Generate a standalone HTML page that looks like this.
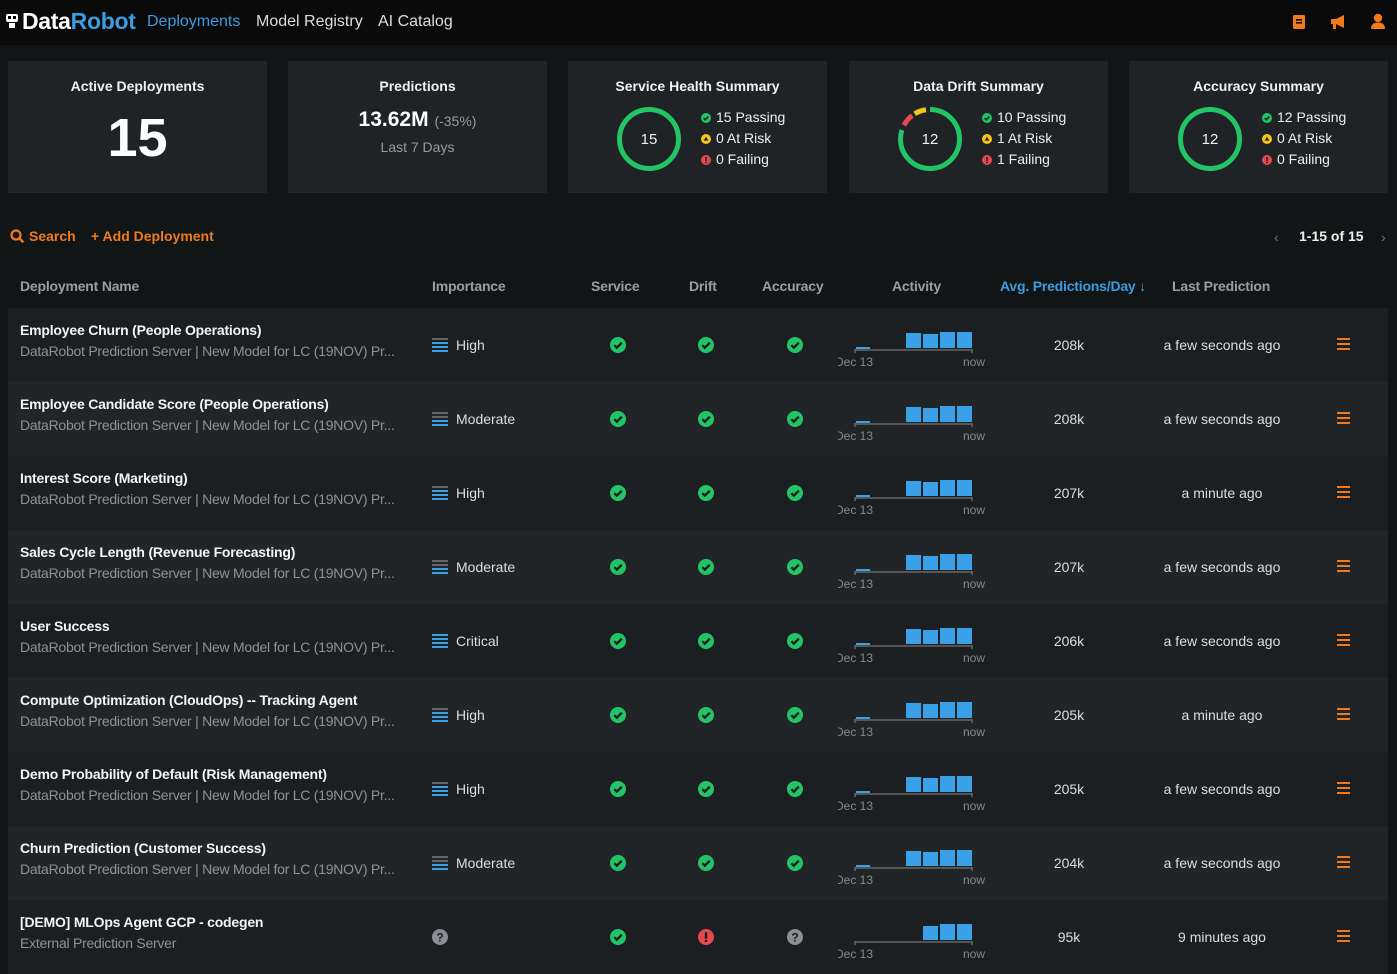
<!DOCTYPE html>
<html><head><meta charset="utf-8"><style>
*{box-sizing:border-box;margin:0;padding:0}
body{width:1397px;height:964px;overflow:hidden;background:#111516;font-family:"Liberation Sans",sans-serif;color:#e8e8e8;position:relative}
.top{position:absolute;left:0;top:0;width:1397px;height:45px;background:#0a0a0a}
.logo{position:absolute;left:22px;top:8px;font-size:23px;font-weight:bold;color:#fff;letter-spacing:-0.3px}
.logo span{color:#3d9be0}
.nav{position:absolute;top:13px;font-size:16px;color:#ddd}
.card{position:absolute;top:61px;width:259px;height:132px;background:#1f2326}
.card h3{position:absolute;top:17px;width:100%;text-align:center;font-size:14px;font-weight:bold;color:#f0f0f0}
.ring{position:absolute;left:48px;top:45px}
.leg{position:absolute;left:133px;top:46px;font-size:14px;line-height:21px;color:#eee}
.leg div{display:flex;align-items:center}
.leg svg{margin-right:5px}
.act{position:absolute;top:228px;font-size:14px;font-weight:bold;color:#f07a1c}
.th{position:absolute;top:278px;font-size:14px;font-weight:bold;color:#9a9ea2;letter-spacing:-0.2px}
.row{position:absolute;left:8px;width:1380px;height:74px}
.r0{background:#1c1f22}.r1{background:#222528}
.nm{position:absolute;left:12px;top:14px;font-size:14px;font-weight:bold;color:#f4f4f4;letter-spacing:-0.2px}
.sb{position:absolute;left:12px;top:35px;font-size:14px;color:#8e9296;letter-spacing:-0.25px}
.imp{position:absolute;left:424px;top:29px;font-size:14px;color:#ddd;display:flex;align-items:center}
.imp svg{margin-right:8px}
.ic{position:absolute;top:29px}
.sp{position:absolute;left:830px;top:10px}
.num{position:absolute;left:1021px;width:80px;text-align:center;top:29px;font-size:14px;color:#ddd}
.lp{position:absolute;left:1134px;width:160px;text-align:center;top:29px;font-size:14px;color:#ddd}
.mn{position:absolute;left:1329px;top:30px}
</style></head><body>
<svg width="0" height="0" style="position:absolute"><defs>
<g id="ok"><circle cx="8" cy="8" r="8" fill="#22c466"/><path d="M4.3 8.2l2.5 2.5 5-5" stroke="#1c1f22" stroke-width="2.3" fill="none"/></g>
<g id="bad"><circle cx="8" cy="8" r="8" fill="#e5484d"/><rect x="6.8" y="3.3" width="2.4" height="6.3" fill="#1c1f22"/><rect x="6.8" y="10.8" width="2.4" height="2.2" fill="#1c1f22"/></g>
<g id="q"><circle cx="8" cy="8" r="8" fill="#8a8d91"/><text x="8" y="12.5" font-size="12" font-weight="bold" text-anchor="middle" fill="#1c1f22" font-family="Liberation Sans">?</text></g>
<g id="sok"><circle cx="5" cy="5" r="5" fill="#22c466"/><path d="M2.6 5.2l1.6 1.6 3.2-3.2" stroke="#1f2326" stroke-width="1.6" fill="none"/></g>
<g id="swarn"><circle cx="5" cy="5" r="5" fill="#f5c518"/><path d="M5 2.6l2.3 4H2.7z" fill="#1f2326"/></g>
<g id="sbad"><circle cx="5" cy="5" r="5" fill="#e5484d"/><rect x="4.2" y="2" width="1.6" height="4" fill="#1f2326"/><rect x="4.2" y="6.8" width="1.6" height="1.4" fill="#1f2326"/></g>
<g id="menu"><rect x="0" y="0" width="13" height="2" fill="#f07a1c"/><rect x="0" y="5" width="13" height="2" fill="#f07a1c"/><rect x="0" y="10" width="13" height="2" fill="#f07a1c"/></g>
<g id="spark"><rect x="18" y="29" width="14" height="2" fill="#3aa0e8"/><rect x="68" y="15" width="15" height="15" fill="#3aa0e8"/><rect x="85" y="16" width="15" height="14" fill="#3aa0e8"/><rect x="102" y="14" width="15" height="16" fill="#3aa0e8"/><rect x="119" y="14" width="15" height="16" fill="#3aa0e8"/><path d="M17 31v4M17 32h117M134 31v4" stroke="#666" stroke-width="1.5" fill="none"/><text x="-3" y="48" font-size="12" fill="#888" font-family="Liberation Sans">Dec 13</text><text x="125" y="48" font-size="12" fill="#888" font-family="Liberation Sans">now</text></g>
<g id="i3"><rect y="0" width="16" height="2" fill="#666"/><rect y="4" width="16" height="2" fill="#3aa0e8"/><rect y="8" width="16" height="2" fill="#3aa0e8"/><rect y="12" width="16" height="2" fill="#3aa0e8"/></g>
<g id="i2"><rect y="0" width="16" height="2" fill="#666"/><rect y="4" width="16" height="2" fill="#666"/><rect y="8" width="16" height="2" fill="#3aa0e8"/><rect y="12" width="16" height="2" fill="#3aa0e8"/></g>
<g id="i4"><rect y="0" width="16" height="2" fill="#3aa0e8"/><rect y="4" width="16" height="2" fill="#3aa0e8"/><rect y="8" width="16" height="2" fill="#3aa0e8"/><rect y="12" width="16" height="2" fill="#3aa0e8"/></g>
</defs></svg>
<div class="top">
<svg style="position:absolute;left:5px;top:13px" width="14" height="16"><rect x="1" y="1" width="12" height="8" rx="2" fill="#fff"/><rect x="3" y="3" width="3" height="3" fill="#000"/><rect x="8" y="3" width="3" height="3" fill="#000"/><rect x="4" y="10" width="6" height="5" fill="#fff"/></svg>
<div class="logo">Data<span>Robot</span></div>
<div class="nav" style="left:147px;color:#3d9be0">Deployments</div>
<div class="nav" style="left:256px">Model Registry</div>
<div class="nav" style="left:378px">AI Catalog</div>
<svg style="position:absolute;left:1292px;top:14px" width="14" height="16"><rect x="1" y="1" width="12" height="14" rx="1.5" fill="#f07a1c"/><rect x="4" y="5" width="6" height="1.6" fill="#0a0a0a"/><rect x="4" y="8" width="6" height="1.6" fill="#0a0a0a"/></svg>
<svg style="position:absolute;left:1330px;top:14px" width="18" height="16"><path d="M1 5h5l8-4v13l-8-4H1z" fill="#f07a1c"/><rect x="3" y="10" width="3" height="5" fill="#f07a1c"/></svg>
<svg style="position:absolute;left:1370px;top:13px" width="16" height="17"><circle cx="8" cy="5" r="4.2" fill="#f07a1c"/><path d="M1 16c0-5 3-6.5 7-6.5s7 1.5 7 6.5z" fill="#f07a1c"/></svg>
</div>

<div class="card" style="left:8px"><h3>Active Deployments</h3><div style="position:absolute;top:46px;width:100%;text-align:center;font-size:54px;font-weight:bold;color:#fff">15</div></div>
<div class="card" style="left:288px"><h3>Predictions</h3><div style="position:absolute;top:47px;width:100%;text-align:center;font-size:21px;font-weight:bold;color:#fff">13.62M <span style="font-size:14px;font-weight:normal;color:#999">(-35%)</span></div><div style="position:absolute;top:78px;width:100%;text-align:center;font-size:14px;color:#999">Last 7 Days</div></div>
<div class="card" style="left:568px"><h3>Service Health Summary</h3>
<svg class="ring" width="66" height="66"><circle cx="33" cy="33" r="29.5" stroke="#22c466" stroke-width="5" fill="none"/><text x="33" y="38" font-size="15" text-anchor="middle" fill="#eee" font-family="Liberation Sans">15</text></svg>
<div class="leg"><div><svg width="10" height="10"><use href="#sok"/></svg>15 Passing</div><div><svg width="10" height="10"><use href="#swarn"/></svg>0 At Risk</div><div><svg width="10" height="10"><use href="#sbad"/></svg>0 Failing</div></div></div>
<div class="card" style="left:849px"><h3>Data Drift Summary</h3>
<svg class="ring" width="66" height="66"><g transform="rotate(-90 33 33)"><circle cx="33" cy="33" r="29.5" stroke="#22c466" stroke-width="5" fill="none" stroke-dasharray="148 37.4" stroke-dashoffset="0"/><circle cx="33" cy="33" r="29.5" stroke="#e5484d" stroke-width="5" fill="none" stroke-dasharray="13 172.4" stroke-dashoffset="-153"/><circle cx="33" cy="33" r="29.5" stroke="#f5c518" stroke-width="5" fill="none" stroke-dasharray="12 173.4" stroke-dashoffset="-169"/></g><text x="33" y="38" font-size="15" text-anchor="middle" fill="#eee" font-family="Liberation Sans">12</text></svg>
<div class="leg"><div><svg width="10" height="10"><use href="#sok"/></svg>10 Passing</div><div><svg width="10" height="10"><use href="#swarn"/></svg>1 At Risk</div><div><svg width="10" height="10"><use href="#sbad"/></svg>1 Failing</div></div></div>
<div class="card" style="left:1129px"><h3>Accuracy Summary</h3>
<svg class="ring" width="66" height="66"><circle cx="33" cy="33" r="29.5" stroke="#22c466" stroke-width="5" fill="none"/><text x="33" y="38" font-size="15" text-anchor="middle" fill="#eee" font-family="Liberation Sans">12</text></svg>
<div class="leg"><div><svg width="10" height="10"><use href="#sok"/></svg>12 Passing</div><div><svg width="10" height="10"><use href="#swarn"/></svg>0 At Risk</div><div><svg width="10" height="10"><use href="#sbad"/></svg>0 Failing</div></div></div>

<svg style="position:absolute;left:10px;top:229px" width="15" height="15"><circle cx="6" cy="6" r="4.5" stroke="#f07a1c" stroke-width="2.2" fill="none"/><path d="M9.3 9.3l4 4" stroke="#f07a1c" stroke-width="2.5"/></svg>
<div class="act" style="left:29px">Search</div>
<div class="act" style="left:91px">+ Add Deployment</div>
<div style="position:absolute;left:1274px;top:229px;font-size:14px;color:#777">‹</div>
<div style="position:absolute;left:1299px;top:228px;font-size:14px;font-weight:bold;color:#eee">1-15 of 15</div>
<div style="position:absolute;left:1381px;top:229px;font-size:14px;color:#777">›</div>

<div class="th" style="left:20px">Deployment Name</div>
<div class="th" style="left:432px">Importance</div>
<div class="th" style="left:591px">Service</div>
<div class="th" style="left:689px">Drift</div>
<div class="th" style="left:762px">Accuracy</div>
<div class="th" style="left:892px">Activity</div>
<div class="th" style="left:1000px;color:#3d9be0">Avg. Predictions/Day ↓</div>
<div class="th" style="left:1172px">Last Prediction</div>

<div class="row r0" style="top:308px"><div class="nm">Employee Churn (People Operations)</div><div class="sb">DataRobot Prediction Server | New Model for LC (19NOV) Pr...</div><div class="imp"><svg width="16" height="14"><use href="#i3"/></svg>High</div><svg class="ic" style="left:602px" width="16" height="16"><use href="#ok"/></svg><svg class="ic" style="left:690px" width="16" height="16"><use href="#ok"/></svg><svg class="ic" style="left:779px" width="16" height="16"><use href="#ok"/></svg><svg class="sp" width="160" height="56"><use href="#spark"/></svg><div class="num">208k</div><div class="lp">a few seconds ago</div><svg class="mn" width="13" height="12"><use href="#menu"/></svg></div>
<div class="row r1" style="top:382px"><div class="nm">Employee Candidate Score (People Operations)</div><div class="sb">DataRobot Prediction Server | New Model for LC (19NOV) Pr...</div><div class="imp"><svg width="16" height="14"><use href="#i2"/></svg>Moderate</div><svg class="ic" style="left:602px" width="16" height="16"><use href="#ok"/></svg><svg class="ic" style="left:690px" width="16" height="16"><use href="#ok"/></svg><svg class="ic" style="left:779px" width="16" height="16"><use href="#ok"/></svg><svg class="sp" width="160" height="56"><use href="#spark"/></svg><div class="num">208k</div><div class="lp">a few seconds ago</div><svg class="mn" width="13" height="12"><use href="#menu"/></svg></div>
<div class="row r0" style="top:456px"><div class="nm">Interest Score (Marketing)</div><div class="sb">DataRobot Prediction Server | New Model for LC (19NOV) Pr...</div><div class="imp"><svg width="16" height="14"><use href="#i3"/></svg>High</div><svg class="ic" style="left:602px" width="16" height="16"><use href="#ok"/></svg><svg class="ic" style="left:690px" width="16" height="16"><use href="#ok"/></svg><svg class="ic" style="left:779px" width="16" height="16"><use href="#ok"/></svg><svg class="sp" width="160" height="56"><use href="#spark"/></svg><div class="num">207k</div><div class="lp">a minute ago</div><svg class="mn" width="13" height="12"><use href="#menu"/></svg></div>
<div class="row r1" style="top:530px"><div class="nm">Sales Cycle Length (Revenue Forecasting)</div><div class="sb">DataRobot Prediction Server | New Model for LC (19NOV) Pr...</div><div class="imp"><svg width="16" height="14"><use href="#i2"/></svg>Moderate</div><svg class="ic" style="left:602px" width="16" height="16"><use href="#ok"/></svg><svg class="ic" style="left:690px" width="16" height="16"><use href="#ok"/></svg><svg class="ic" style="left:779px" width="16" height="16"><use href="#ok"/></svg><svg class="sp" width="160" height="56"><use href="#spark"/></svg><div class="num">207k</div><div class="lp">a few seconds ago</div><svg class="mn" width="13" height="12"><use href="#menu"/></svg></div>
<div class="row r0" style="top:604px"><div class="nm">User Success</div><div class="sb">DataRobot Prediction Server | New Model for LC (19NOV) Pr...</div><div class="imp"><svg width="16" height="14"><use href="#i4"/></svg>Critical</div><svg class="ic" style="left:602px" width="16" height="16"><use href="#ok"/></svg><svg class="ic" style="left:690px" width="16" height="16"><use href="#ok"/></svg><svg class="ic" style="left:779px" width="16" height="16"><use href="#ok"/></svg><svg class="sp" width="160" height="56"><use href="#spark"/></svg><div class="num">206k</div><div class="lp">a few seconds ago</div><svg class="mn" width="13" height="12"><use href="#menu"/></svg></div>
<div class="row r1" style="top:678px"><div class="nm">Compute Optimization (CloudOps) -- Tracking Agent</div><div class="sb">DataRobot Prediction Server | New Model for LC (19NOV) Pr...</div><div class="imp"><svg width="16" height="14"><use href="#i3"/></svg>High</div><svg class="ic" style="left:602px" width="16" height="16"><use href="#ok"/></svg><svg class="ic" style="left:690px" width="16" height="16"><use href="#ok"/></svg><svg class="ic" style="left:779px" width="16" height="16"><use href="#ok"/></svg><svg class="sp" width="160" height="56"><use href="#spark"/></svg><div class="num">205k</div><div class="lp">a minute ago</div><svg class="mn" width="13" height="12"><use href="#menu"/></svg></div>
<div class="row r0" style="top:752px"><div class="nm">Demo Probability of Default (Risk Management)</div><div class="sb">DataRobot Prediction Server | New Model for LC (19NOV) Pr...</div><div class="imp"><svg width="16" height="14"><use href="#i3"/></svg>High</div><svg class="ic" style="left:602px" width="16" height="16"><use href="#ok"/></svg><svg class="ic" style="left:690px" width="16" height="16"><use href="#ok"/></svg><svg class="ic" style="left:779px" width="16" height="16"><use href="#ok"/></svg><svg class="sp" width="160" height="56"><use href="#spark"/></svg><div class="num">205k</div><div class="lp">a few seconds ago</div><svg class="mn" width="13" height="12"><use href="#menu"/></svg></div>
<div class="row r1" style="top:826px"><div class="nm">Churn Prediction (Customer Success)</div><div class="sb">DataRobot Prediction Server | New Model for LC (19NOV) Pr...</div><div class="imp"><svg width="16" height="14"><use href="#i2"/></svg>Moderate</div><svg class="ic" style="left:602px" width="16" height="16"><use href="#ok"/></svg><svg class="ic" style="left:690px" width="16" height="16"><use href="#ok"/></svg><svg class="ic" style="left:779px" width="16" height="16"><use href="#ok"/></svg><svg class="sp" width="160" height="56"><use href="#spark"/></svg><div class="num">204k</div><div class="lp">a few seconds ago</div><svg class="mn" width="13" height="12"><use href="#menu"/></svg></div>
<div class="row r0" style="top:900px"><div class="nm">[DEMO] MLOps Agent GCP - codegen</div><div class="sb">External Prediction Server</div><svg class="ic" style="left:424px" width="16" height="16"><use href="#q"/></svg><svg class="ic" style="left:602px" width="16" height="16"><use href="#ok"/></svg><svg class="ic" style="left:690px" width="16" height="16"><use href="#bad"/></svg><svg class="ic" style="left:779px" width="16" height="16"><use href="#q"/></svg>
<svg class="sp" width="160" height="56"><rect x="85" y="16" width="15" height="14" fill="#3aa0e8"/><rect x="102" y="14" width="15" height="16" fill="#3aa0e8"/><rect x="119" y="14" width="15" height="16" fill="#3aa0e8"/><path d="M17 31v4M17 32h117M134 31v4" stroke="#666" stroke-width="1.5" fill="none"/><text x="-3" y="48" font-size="12" fill="#888" font-family="Liberation Sans">Dec 13</text><text x="125" y="48" font-size="12" fill="#888" font-family="Liberation Sans">now</text></svg>
<div class="num">95k</div><div class="lp">9 minutes ago</div><svg class="mn" width="13" height="12"><use href="#menu"/></svg></div>
</body></html>
